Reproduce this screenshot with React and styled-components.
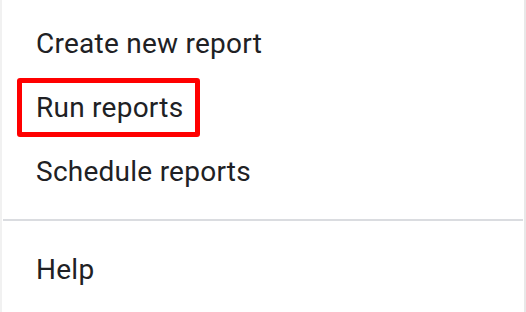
import React from 'react';
import styled, { createGlobalStyle } from 'styled-components';

const GlobalStyle = createGlobalStyle`
  html, body {
    margin: 0;
    padding: 0;
    background: #ffffff;
  }
  body {
    font-family: Roboto, "Liberation Sans", Arial, sans-serif;
  }
`;

const Menu = styled.div`
  width: 526px;
  height: 312px;
  box-sizing: border-box;
  padding-top: 11px;
  border-left: 2px solid #f1f1f1;
  border-right: 2px solid #e8e8e8;
  background: #ffffff;
  overflow: hidden;
`;

const Item = styled.div`
  height: 64px;
  display: flex;
  align-items: center;
  padding-left: 34px;
  font-size: 28px;
  color: #202124;
  letter-spacing: 0.25px;
`;

const Highlight = styled.span`
  display: inline-flex;
  align-items: center;
  box-sizing: border-box;
  height: 59px;
  margin-left: -19px;
  padding: 0 12px 0 14px;
  border: 5px solid #ff0000;
  border-radius: 3px;
`;

const Divider = styled.hr`
  border: none;
  height: 2px;
  background: #dadce0;
  margin: 16px 1px;
`;

const items = ['Create new report', 'Run reports', 'Schedule reports'];

export default function App() {
  return (
    <>
      <GlobalStyle />
      <Menu>
        {items.map((label) => (
          <Item key={label}>
            {label === 'Run reports' ? <Highlight>{label}</Highlight> : label}
          </Item>
        ))}
        <Divider />
        <Item>Help</Item>
      </Menu>
    </>
  );
}
